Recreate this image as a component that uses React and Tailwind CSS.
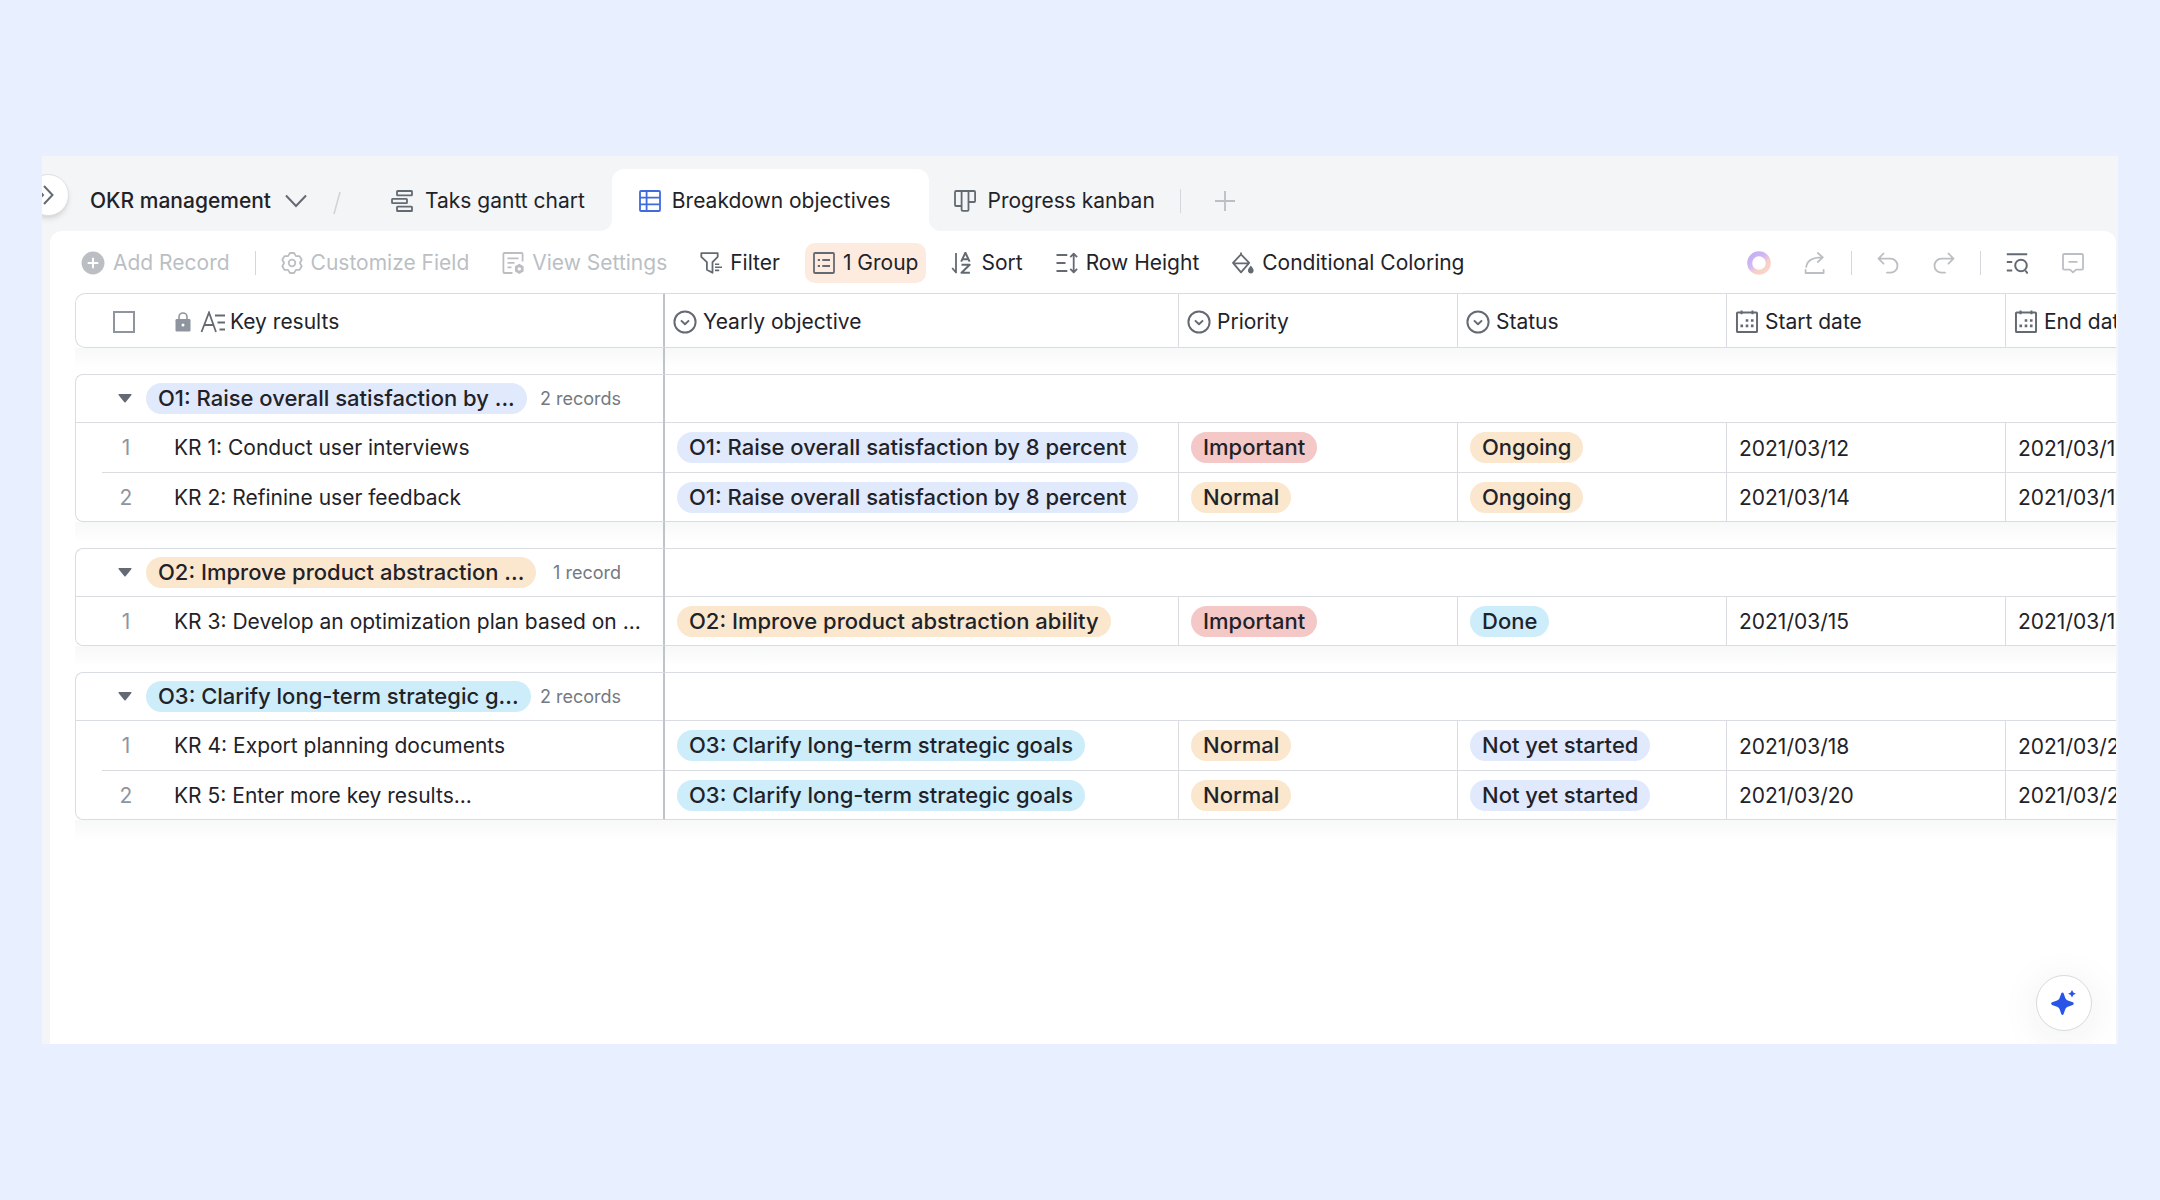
const INK = "text-[#1f2329]";

function Icon({ children, className = "", size = 22 }) {
  return (
    <svg
      width={size}
      height={size}
      viewBox="0 0 22 22"
      fill="none"
      stroke="currentColor"
      strokeWidth="1.8"
      strokeLinejoin="round"
      className={"shrink-0 " + className}
      aria-hidden="true"
    >
      {children}
    </svg>
  );
}

const GanttIcon = () => (
  <Icon className="text-[#646a73]">
    <rect x="6" y="1" width="15" height="4.4" rx="0.6" />
    <rect x="1" y="8.8" width="15" height="4.4" rx="0.6" />
    <rect x="6" y="16.6" width="15" height="4.4" rx="0.6" />
  </Icon>
);

const GridIcon = () => (
  <Icon className="text-[#3f6bdc]">
    <rect x="1" y="1" width="20" height="20" rx="1" />
    <path d="M1 7.6h20M1 14.3h20M7.6 1v20" />
  </Icon>
);

const KanbanIcon = () => (
  <Icon className="text-[#646a73]">
    <path d="M1 2.2c0-.7.4-1.2 1.1-1.2H20c.7 0 1.1.5 1.1 1.2V11c0 .6-.4 1-1 1h-5.5M1 2.2V15c0 .6.4 1 1 1h5.6" />
    <path d="M7.6 1v18.8c0 .6.4 1 1 1h4.9c.6 0 1-.4 1-1V1" />
  </Icon>
);

const AddCircleIcon = () => (
  <Icon size={24}>
    <circle cx="11" cy="11" r="10.5" fill="currentColor" stroke="none" />
    <path d="M11 6.8v8.4M6.8 11h8.4" stroke="#fff" strokeLinecap="round" />
  </Icon>
);

const GearIcon = () => (
  <Icon>
    <path d="M8.9 1h4.2L14.8 3.9l.4.3 3.4 0 2.1 3.6L19 10.7v.6l1.7 2.9-2.1 3.6-3.4 0-.4.3L13.1 21H8.9l-1.7-2.9-.4-.3-3.4 0-2.1-3.6L3 11.3v-.6L1.3 7.8l2.1-3.6 3.4 0 .4-.3z" />
    <circle cx="11" cy="11" r="3.3" />
  </Icon>
);

const ViewSettingsIcon = () => (
  <Icon>
    <path d="M20.6 9.5V2c0-.6-.4-1-1-1H2.4c-.6 0-1 .4-1 1v18c0 .6.4 1 1 1h8.1" />
    <path d="M5.5 6.3h11M5.5 10.8h7M5.5 15.3h4" />
    <path d="m17.3 11.8 4.3 2.5v5.2l-4.3 2.5-4.3-2.5v-5.2z" fill="currentColor" stroke="none" />
    <circle cx="17.3" cy="16.9" r="1.7" fill="#fff" stroke="none" />
  </Icon>
);

const FilterIcon = () => (
  <Icon>
    <path d="M1.3 1.2h16.4v3.6l-5.2 5.4v10.6l-5.6-3V10.2L1.3 4.8z" />
    <path d="M15 12.2h4.2M15 15.3h7M15 18.4h4.2" strokeWidth="1.6" />
  </Icon>
);

const GroupIcon = () => (
  <Icon>
    <rect x="1" y="1" width="20" height="20" rx="1" />
    <path d="M4.8 8h2.2M9.3 8H17M4.8 14h2.2M9.3 14H17" strokeWidth="2" />
  </Icon>
);

const SortIcon = () => (
  <Icon>
    <path d="M5 1v19.5L1.2 16" />
    <path d="m10.2 9.6 4.2-8.9 4.2 8.9M11.6 7.2h5.6M10.5 12.8h8.2l-8.2 8h8.4" strokeWidth="2" />
  </Icon>
);

const RowHeightIcon = () => (
  <Icon>
    <path d="M.5 3h10.8M.5 11h9M.5 19h10.8" />
    <path d="M17.7 2v18M14.3 5.2l3.4-3.6 3.4 3.6M14.3 16.8l3.4 3.6 3.4-3.6" />
  </Icon>
);

const BucketIcon = () => (
  <Icon>
    <path d="M9 .6v2.2M9 2.4l8.2 8.4L9 20.4 1 10.8zM1 11.3h16.2" />
    <path d="M18.8 13.6c1.6 2 2.8 3.5 2.8 5a2.8 2.8 0 0 1-5.6 0c0-1.5 1.2-3 2.8-5z" fill="currentColor" stroke="none" />
  </Icon>
);

const RingIcon = () => (
  <svg width="24" height="24" viewBox="0 0 24 24" fill="none" aria-hidden="true">
    <defs>
      <linearGradient id="ring" x1="4" y1="2" x2="20" y2="22" gradientUnits="userSpaceOnUse">
        <stop offset="0" stopColor="#bfaef8" />
        <stop offset="0.4" stopColor="#d3b8f3" />
        <stop offset="0.65" stopColor="#f6cfcb" />
        <stop offset="1" stopColor="#fad6c4" />
      </linearGradient>
    </defs>
    <circle cx="12" cy="12" r="9.3" stroke="url(#ring)" strokeWidth="5" />
  </svg>
);

const ShareIcon = () => (
  <Icon>
    <path d="M2.2 15c.8-6 5-9.6 16-9.6M13.8 1l5 4.4-5 4.6M1.6 18v3h18v-3" strokeLinecap="round" />
  </Icon>
);

const UndoIcon = () => (
  <Icon>
    <path d="M6.5 1.5 1.5 6.7l5 5M1.8 6.7h11.7a7 7 0 0 1 0 14H10" strokeLinecap="round" />
  </Icon>
);

const RedoIcon = () => (
  <Icon>
    <path d="m15.5 1.5 5 5.2-5 5M20.2 6.7H8.5a7 7 0 0 0 0 14H12" strokeLinecap="round" />
  </Icon>
);

const SearchListIcon = () => (
  <Icon>
    <path d="M.8 2.2h20.4M.8 10h5.4M.8 18.6h5.4M19.3 18.5l2.4 3" strokeWidth="2" />
    <circle cx="15" cy="13.5" r="5.8" strokeWidth="2" />
  </Icon>
);

const CommentIcon = () => (
  <Icon>
    <path d="M2.2 2h17.6c.7 0 1.2.5 1.2 1.2v13.2c0 .7-.5 1.2-1.2 1.2H14l-3 2.8-3-2.8H2.2c-.7 0-1.2-.5-1.2-1.2V3.2C1 2.5 1.5 2 2.2 2zM6.5 9.8h9" />
  </Icon>
);

const LockIcon = () => (
  <svg width="16" height="20" viewBox="0 0 16 20" fill="none" className="shrink-0 text-[#8f959e]" aria-hidden="true">
    <path d="M4 8V5a4 4 0 0 1 8 0v3" stroke="currentColor" strokeWidth="1.6" />
    <rect x="0.5" y="7" width="15" height="12.5" rx="1.2" fill="currentColor" />
    <circle cx="8" cy="13" r="1.5" fill="#fff" />
  </svg>
);

const TextFieldIcon = () => (
  <svg width="26" height="22" viewBox="0 0 26 22" fill="none" stroke="currentColor" strokeWidth="1.8" className="shrink-0 text-[#646a73]" aria-hidden="true">
    <path d="M1.5 21 9 1.5 16 21M4.5 14h9M15 4.5h10M17.5 11.5H25M19.5 18.5H25" />
  </svg>
);

const SelectFieldIcon = () => (
  <Icon size={24} className="text-[#646a73]">
    <circle cx="11" cy="11" r="9.7" />
    <path d="m7.3 9.5 3.7 3.5 3.7-3.5" />
  </Icon>
);

const DateFieldIcon = () => (
  <Icon size={24} className="text-[#646a73]">
    <rect x="1.8" y="2.2" width="18.4" height="18" rx="0.8" />
    <path d="M6 .4v3.6M16 .4v3.6" />
    <path d="M9.8 9.6h2.4M14.6 9.6h2.4M5 14.6h2.4M9.8 14.6h2.4M14.6 14.6h2.4" strokeWidth="2.4" />
  </Icon>
);

const TONES = {
  blue: "bg-[#e1e9fd]",
  orange: "bg-[#fbe7cd]",
  cyan: "bg-[#cdedfb]",
  red: "bg-[#f3c8c6]",
};

function Chip({ tone, children }) {
  return (
    <span className={"inline-block whitespace-nowrap rounded-full px-3 text-[22px] font-medium leading-[31px] " + TONES[tone]}>
      {children}
    </span>
  );
}

const O1 = { name: "O1: Raise overall satisfaction by 8 percent", tone: "blue" };
const O2 = { name: "O2: Improve product abstraction ability", tone: "orange" };
const O3 = { name: "O3: Clarify long-term strategic goals", tone: "cyan" };
const IMPORTANT = ["Important", "red"];
const NORMAL = ["Normal", "orange"];
const ONGOING = ["Ongoing", "orange"];
const DONE = ["Done", "cyan"];
const NOT_STARTED = ["Not yet started", "blue"];

const GROUPS = [
  {
    objective: O1,
    label: "O1: Raise overall satisfaction by ...",
    count: "2 records",
    rows: [
      { name: "KR 1: Conduct user interviews", priority: IMPORTANT, status: ONGOING, start: "2021/03/12", end: "2021/03/15" },
      { name: "KR 2: Refinine user feedback", priority: NORMAL, status: ONGOING, start: "2021/03/14", end: "2021/03/16" },
    ],
  },
  {
    objective: O2,
    label: "O2: Improve product abstraction ...",
    count: "1 record",
    rows: [
      { name: "KR 3: Develop an optimization plan based on ...", priority: IMPORTANT, status: DONE, start: "2021/03/15", end: "2021/03/18" },
    ],
  },
  {
    objective: O3,
    label: "O3: Clarify long-term strategic g...",
    count: "2 records",
    rows: [
      { name: "KR 4: Export planning documents", priority: NORMAL, status: NOT_STARTED, start: "2021/03/18", end: "2021/03/20" },
      { name: "KR 5: Enter more key results...", priority: NORMAL, status: NOT_STARTED, start: "2021/03/20", end: "2021/03/24" },
    ],
  },
];

const FROZEN = "border-r-2 border-r-[#bfc4cb]";

function Spacer({ last = false }) {
  return (
    <tr aria-hidden="true">
      <td className={"h-[26px] bg-linear-to-b from-[#f7f8f8] to-white to-80% p-0 " + (last ? "" : FROZEN)} />
      <td colSpan={5} className="bg-linear-to-b from-[#f7f8f8] to-white to-80% p-0" />
    </tr>
  );
}

function HeadCell({ icon, children }) {
  return (
    <th scope="col" className="border-y border-r border-[#d9dde2] p-0 pl-2 pt-0.5 text-left font-normal">
      <span className="flex items-center gap-[6px] whitespace-nowrap">
        {icon}
        {children}
      </span>
    </th>
  );
}

function GroupRows({ group }) {
  return (
    <>
      <tr>
        <td className={"h-12 rounded-tl-lg border-l border-t border-l-[#d9dde2] border-t-[#d9dde2] p-0 " + FROZEN}>
          <div className="flex items-center px-[42px]">
            <button type="button" aria-label="Collapse group" className="mr-[14px] text-[#646a73]">
              <svg width="14" height="9" viewBox="0 0 14 9" fill="currentColor" aria-hidden="true">
                <path d="M1.2 0h11.6c.7 0 1 .7.5 1.2L7.6 8.2c-.3.4-.9.4-1.2 0L.7 1.2C.2.7.5 0 1.2 0z" />
              </svg>
            </button>
            <Chip tone={group.objective.tone}>{group.label}</Chip>
            <span className="ml-auto whitespace-nowrap text-[18px] text-[#747981]">{group.count}</span>
          </div>
        </td>
        <td colSpan={5} className="border-t border-[#d9dde2] p-0" />
      </tr>
      {group.rows.map((row, i) => {
        const last = i === group.rows.length - 1;
        const cell = "border-r border-t border-[#d9dde2] p-0 pl-3 " + (last ? "border-b" : "");
        return (
          <tr key={row.name}>
            <td className={"h-[50px] border-l border-l-[#d9dde2] p-0 align-top " + FROZEN + (last ? " rounded-bl-lg border-b border-b-[#d9dde2]" : "")}>
              <div className={"flex h-[49px] items-center border-t border-[#d9dde2] pt-0.5 " + (i > 0 ? "ml-[26px] pl-3" : "pl-[38px]")}>
                <span className="w-6 text-center text-[#8f959e]">{i + 1}</span>
                <span className="ml-9 whitespace-nowrap">{row.name}</span>
              </div>
            </td>
            <td className={cell}>
              <Chip tone={group.objective.tone}>{group.objective.name}</Chip>
            </td>
            <td className={cell}>
              <Chip tone={row.priority[1]}>{row.priority[0]}</Chip>
            </td>
            <td className={cell}>
              <Chip tone={row.status[1]}>{row.status[0]}</Chip>
            </td>
            <td className={cell + " pt-0.5"}>{row.start}</td>
            <td className={cell + " pt-0.5"}>{row.end}</td>
          </tr>
        );
      })}
    </>
  );
}

function Tool({ icon, children, active = false, disabled = false }) {
  const tone = disabled ? "text-[#bbbfc4]" : INK;
  return (
    <button
      type="button"
      disabled={disabled}
      className={"flex h-10 items-center gap-2 whitespace-nowrap rounded-[10px] px-2 " + tone + (active ? " bg-[#fdebdf]" : "")}
    >
      <span className={disabled ? "" : "text-[#646a73]"}>{icon}</span>
      {children}
    </button>
  );
}

function IconButton({ label, children, className = "text-[#bbbfc4]" }) {
  return (
    <button type="button" aria-label={label} className={"flex size-6 items-center justify-center " + className}>
      {children}
    </button>
  );
}

const Rule = ({ className = "" }) => <span className={"h-6 w-px shrink-0 bg-[#d4d7db] " + className} />;

function TabBar() {
  return (
    <header className="flex h-[75px] items-end pl-10">
      <button type="button" className="flex h-[62px] items-center gap-[14px] whitespace-nowrap pt-0.5 font-medium">
        OKR management
        <svg width="22" height="14" viewBox="0 0 22 14" fill="none" stroke="#646a73" strokeWidth="2" aria-hidden="true">
          <path d="m1 1.5 10 10.5L21 1.5" />
        </svg>
      </button>
      <svg width="8" height="24" viewBox="0 0 8 24" className="mb-4 ml-[26px]" aria-hidden="true">
        <path d="M7 1 1 23" stroke="#d0d3d6" strokeWidth="1.5" />
      </svg>
      <nav aria-label="Views" className="ml-[23px] flex h-[62px] items-stretch">
        <button type="button" className="flex items-center gap-3 whitespace-nowrap px-[27px] pt-0.5">
          <GanttIcon />
          Taks gantt chart
        </button>
        <div className="flex items-end text-white">
          <svg width="12" height="12" viewBox="0 0 12 12" fill="currentColor" className="-ml-3" aria-hidden="true">
            <path d="M12 0v12H0C7 12 12 7 12 0z" />
          </svg>
        </div>
        <button type="button" aria-current="page" className="flex items-center gap-[11px] whitespace-nowrap rounded-t-xl bg-white pl-[27px] pr-[39px] pt-0.5">
          <GridIcon />
          Breakdown objectives
        </button>
        <div className="flex items-end text-white">
          <svg width="12" height="12" viewBox="0 0 12 12" fill="currentColor" className="-mr-3" aria-hidden="true">
            <path d="M0 0v12h12C5 12 0 7 0 0z" />
          </svg>
        </div>
        <button type="button" className="flex items-center gap-[11px] whitespace-nowrap px-[25px] pt-0.5">
          <KanbanIcon />
          Progress kanban
        </button>
      </nav>
      <Rule className="mb-[18px]" />
      <button type="button" aria-label="Add view" className="mb-5 ml-[34px] text-[#bbbfc4]">
        <svg width="20" height="20" viewBox="0 0 20 20" fill="none" stroke="currentColor" strokeWidth="1.8" aria-hidden="true">
          <path d="M10 0v20M0 10h20" />
        </svg>
      </button>
    </header>
  );
}

function Toolbar() {
  return (
    <div className="flex h-[62px] items-center pl-[23px] pr-[31px] pt-0.5">
      <div className="flex items-center gap-[17px]">
        <Tool disabled icon={<AddCircleIcon />}>Add Record</Tool>
        <Rule />
        <Tool disabled icon={<GearIcon />}>Customize Field</Tool>
        <Tool disabled icon={<ViewSettingsIcon />}>View Settings</Tool>
        <Tool icon={<FilterIcon />}>Filter</Tool>
        <Tool active icon={<GroupIcon />}>1 Group</Tool>
        <Tool icon={<SortIcon />}>Sort</Tool>
        <Tool icon={<RowHeightIcon />}>Row Height</Tool>
        <Tool icon={<BucketIcon />}>Conditional Coloring</Tool>
      </div>
      <div className="ml-auto flex items-center">
        <IconButton label="Assistant"><RingIcon /></IconButton>
        <IconButton label="Share" className="ml-8 text-[#bbbfc4]"><ShareIcon /></IconButton>
        <Rule className="mx-6" />
        <IconButton label="Undo"><UndoIcon /></IconButton>
        <IconButton label="Redo" className="ml-8 text-[#bbbfc4]"><RedoIcon /></IconButton>
        <Rule className="mx-6" />
        <IconButton label="Find" className="text-[#646a73]"><SearchListIcon /></IconButton>
        <IconButton label="Comments" className="ml-8 text-[#bbbfc4]"><CommentIcon /></IconButton>
      </div>
    </div>
  );
}

function Grid() {
  return (
    <div className="overflow-hidden pl-[25px]">
      <table className="w-[2211px] table-fixed border-separate border-spacing-0">
        <colgroup>
          <col className="w-[590px]" />
          <col className="w-[514px]" />
          <col className="w-[279px]" />
          <col className="w-[269px]" />
          <col className="w-[279px]" />
          <col className="w-[280px]" />
        </colgroup>
        <thead>
          <tr>
            <th scope="col" className={"h-[55px] rounded-l-[10px] border-y border-l border-y-[#d9dde2] border-l-[#d9dde2] p-0 pt-0.5 font-normal " + FROZEN}>
              <span className="flex items-center pl-[37px]">
                <input type="checkbox" aria-label="Select all" className="size-[22px] appearance-none border-2 border-[#8f959e] bg-white" />
                <span className="ml-10 flex items-center gap-[9px]">
                  <LockIcon />
                  <TextFieldIcon />
                </span>
                <span className="ml-1">Key results</span>
              </span>
            </th>
            <HeadCell icon={<SelectFieldIcon />}>Yearly objective</HeadCell>
            <HeadCell icon={<SelectFieldIcon />}>Priority</HeadCell>
            <HeadCell icon={<SelectFieldIcon />}>Status</HeadCell>
            <HeadCell icon={<DateFieldIcon />}>Start date</HeadCell>
            <HeadCell icon={<DateFieldIcon />}>End date</HeadCell>
          </tr>
        </thead>
        <tbody>
          {GROUPS.map((group) => [
            <Spacer key={group.label + "-gap"} />,
            <GroupRows key={group.label} group={group} />,
          ])}
          <Spacer last />
        </tbody>
      </table>
    </div>
  );
}

export default function App() {
  return (
    <div className={"flex min-h-screen flex-col bg-[#e8efff] px-[42px] py-[156px] font-['Inter',sans-serif] text-[21px] leading-[30px] " + INK}>
      <div className="relative flex grow flex-col overflow-hidden bg-[#f3f5f7] pl-2 pr-[2px]">
        <TabBar />
        <main className="grow overflow-hidden rounded-t-xl bg-white">
          <Toolbar />
          <Grid />
        </main>
        <button
          type="button"
          aria-label="Expand sidebar"
          className="absolute -left-[15px] top-[18px] flex size-[42px] items-center justify-end rounded-full border border-[#dee0e3] bg-white pr-[14px] shadow-md"
        >
          <svg width="18" height="20" viewBox="0 0 18 20" fill="none" stroke="#646a73" strokeWidth="2" aria-hidden="true">
            <path d="m8 1 8.500 9L8 19M.5 3l6.500 7-6.500 7" />
          </svg>
        </button>
        <button
          type="button"
          aria-label="Open assistant"
          className="absolute bottom-[13px] right-[26px] flex size-14 items-center justify-center rounded-full border border-[#d8dadd] bg-white shadow-[0_6px_40px_rgba(31,35,41,0.08)]"
        >
          <svg width="26" height="26" viewBox="0 0 26 26" fill="#2955e7" aria-hidden="true">
            <path d="M11.500 2.500c.5 0 .9.300 1.100.8l1.700 4.600c.4 1.200 1.300 2.100 2.500 2.500l5 1.900c1.300.5 1.300 2.100 0 2.600l-5 1.900c-1.200.4-2.100 1.300-2.500 2.500l-1.700 4.700c-.4 1.300-1.900 1.300-2.300 0l-1.700-4.700c-.4-1.200-1.300-2.100-2.500-2.500l-5-1.900c-1.300-.5-1.300-2.100 0-2.600l5-1.900c1.200-.4 2.100-1.300 2.500-2.500l1.700-4.600c.2-.5.6-.8 1.200-.8z" />
            <path d="M21 0l1.300 2.400 2.500 1.300-2.500 1.300L21 7.400 19.700 5l-2.500-1.300 2.500-1.300z" />
          </svg>
        </button>
      </div>
    </div>
  );
}
